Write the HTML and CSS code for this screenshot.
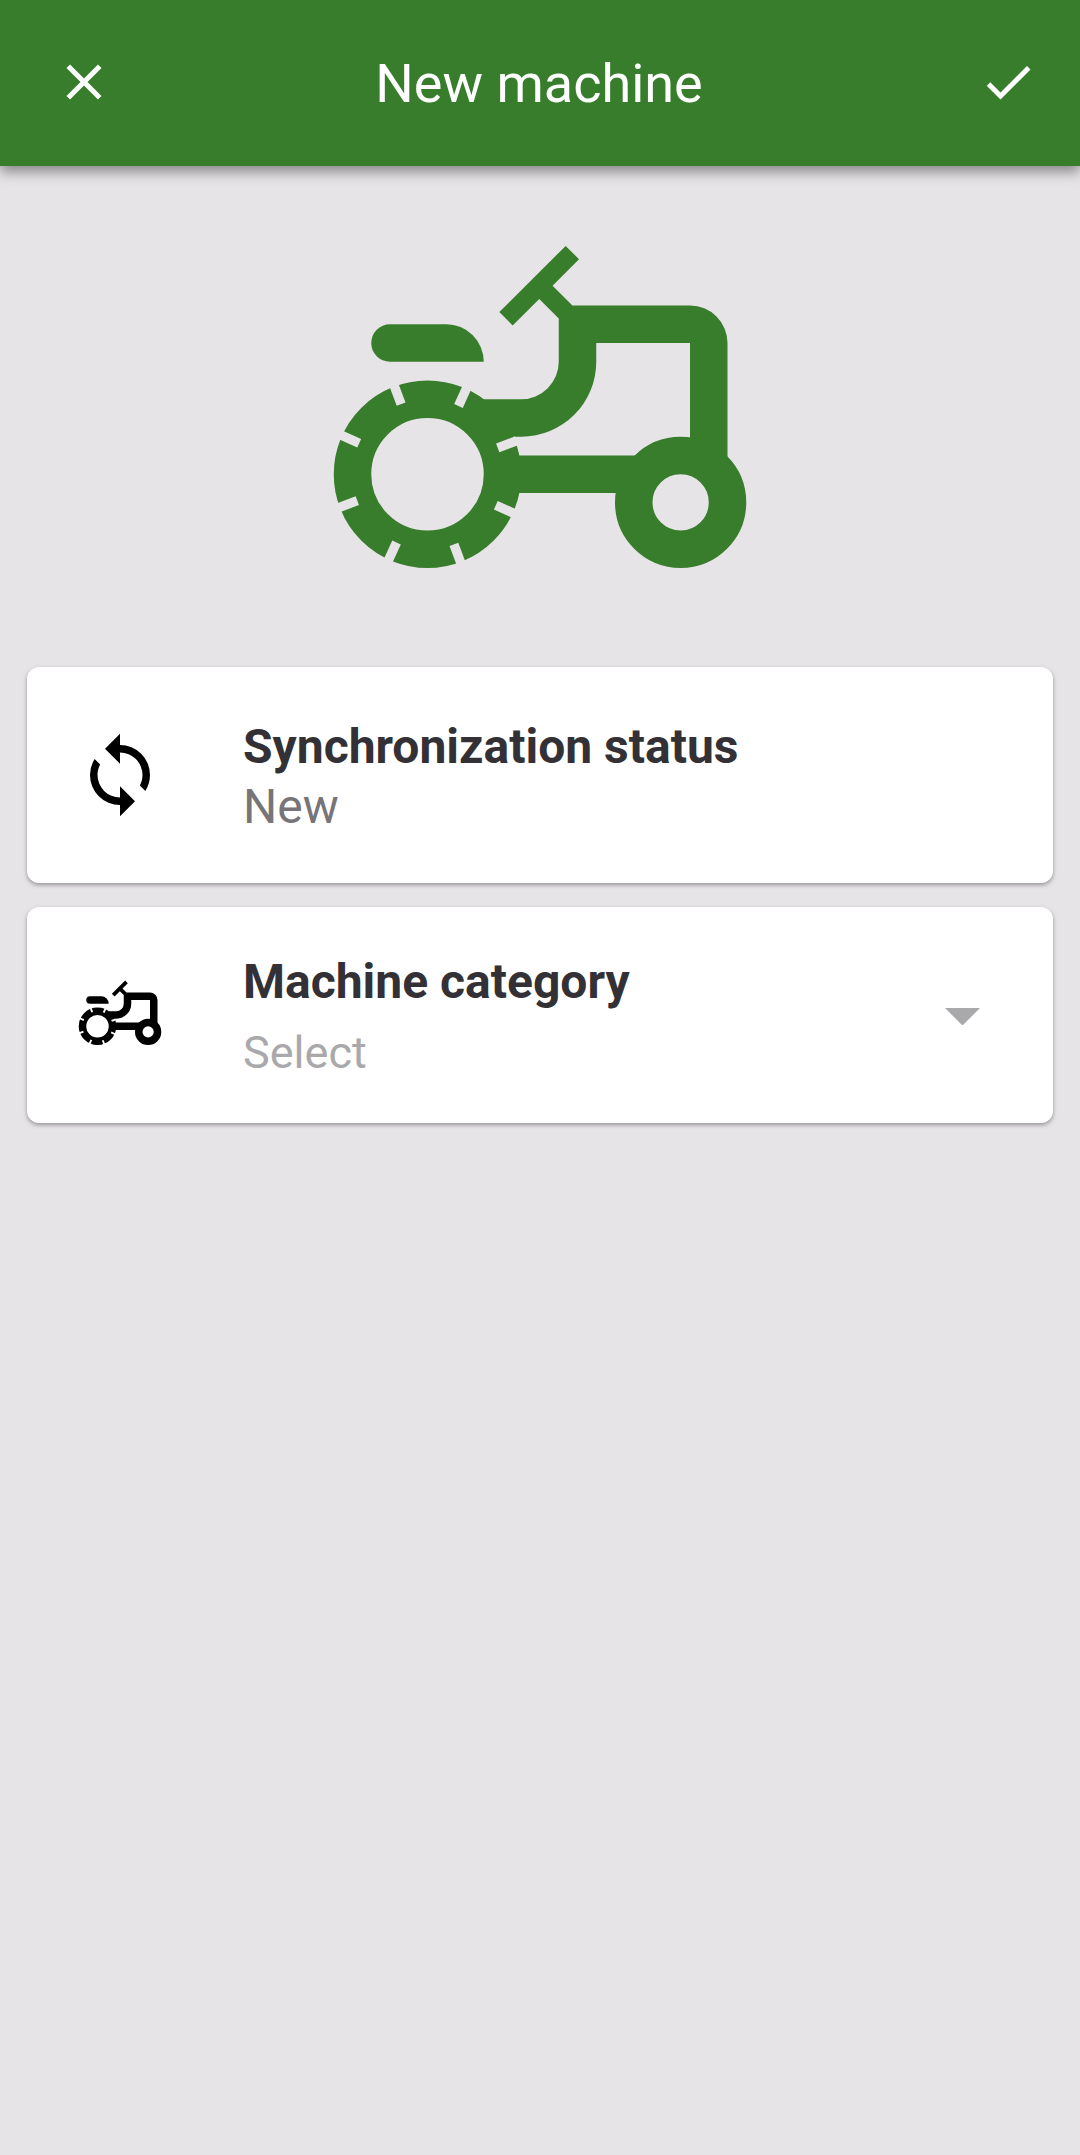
FILE: index.html
```html
<!DOCTYPE html>
<html lang="en">
<head>
  <meta charset="UTF-8" />
  <meta name="viewport" content="width=device-width, initial-scale=1.0"/>
  <title>New machine</title>
  <link rel="stylesheet" href="styles.css">
</head>
<body>

<!-- Shared tractor icon -->
<svg class="sprite" width="0" height="0">
  <defs>
    <mask id="treads" maskUnits="userSpaceOnUse" x="0" y="0" width="24" height="24">
      <rect width="24" height="24" fill="#fff"/>
      <g stroke="#000" stroke-width="0.5">
        <path d="M6 11V9.5" transform="rotate(24.4 6 15)"/>
        <path d="M6 11V9.93" transform="rotate(69.4 6 15)"/>
        <path d="M6 11V9.5" transform="rotate(114.4 6 15)"/>
        <path d="M6 11V9.5" transform="rotate(159.4 6 15)"/>
        <path d="M6 11V9.5" transform="rotate(204.4 6 15)"/>
        <path d="M6 11V9.5" transform="rotate(249.4 6 15)"/>
        <path d="M6 11V9.5" transform="rotate(294.4 6 15)"/>
        <path d="M6 11V9.5" transform="rotate(339.4 6 15)"/>
      </g>
    </mask>
    <symbol id="tractor" viewBox="0 0 24 24">
      <path d="M4 7h3a2 2 0 0 1 2 2H4a1 1 0 0 1 0-2z"/>
      <g mask="url(#treads)">
        <circle cx="6" cy="15" r="4" fill="none" stroke="currentColor" stroke-width="2"/>
        <path d="M8.9 11H11a2 2 0 0 0 2-2V6.69l-1.04-1.04-1.42 1.41-.71-.71 3.54-3.53.71.71-1.41 1.41L13.73 6H20a2 2 0 0 1 2 2v6.2h-2V8h-5v1a4 4 0 0 1-4 4h-1z"/>
        <path d="M10 14h7.2v2H10z"/>
      </g>
      <circle cx="19.5" cy="16.5" r="2.5" fill="none" stroke="currentColor" stroke-width="2"/>
    </symbol>
  </defs>
</svg>

<header class="app-bar">
  <button class="icon-button" aria-label="Close">
    <svg viewBox="0 0 24 24"><path d="M19 6.41L17.59 5 12 10.59 6.41 5 5 6.41 10.59 12 5 17.59 6.41 19 12 13.41 17.59 19 19 17.59 13.41 12z"/></svg>
  </button>
  <h1 class="title">New machine</h1>
  <button class="icon-button" aria-label="Save">
    <svg viewBox="0 0 24 24"><path d="M21 7L9 19l-5.5-5.5 1.41-1.41L9 16.17 19.59 5.59z"/></svg>
  </button>
</header>

<main class="content">
  <svg class="machine-image"><use href="#tractor"/></svg>

  <section class="card">
    <svg class="card-icon" viewBox="0 0 24 24"><path d="M12 18a6 6 0 0 1-6-6c0-1 .25-1.97.7-2.8L5.24 7.74A7.93 7.93 0 0 0 4 12a8 8 0 0 0 8 8v3l4-4-4-4v3zM12 4V1L8 5l4 4V6a6 6 0 0 1 6 6c0 1-.25 1.97-.7 2.8l1.46 1.46A7.93 7.93 0 0 0 20 12a8 8 0 0 0-8-8z"/></svg>
    <div class="card-text">
      <div class="label">Synchronization status</div>
      <div class="value">New</div>
    </div>
  </section>

  <section class="card">
    <svg class="card-icon"><use href="#tractor"/></svg>
    <div class="card-text">
      <div class="label">Machine category</div>
      <div class="placeholder">Select</div>
    </div>
    <svg class="arrow" viewBox="0 0 35 17.5"><path d="M0 0h35L17.5 17.5z"/></svg>
  </section>
</main>

</body>
</html>
```
FILE: styles.css
```css
* {
  box-sizing: border-box;
}
body {
  margin: 0;
  min-height: 100vh;
  font-family: Roboto, sans-serif;
  background: #e6e4e6;
}
svg {
  display: block;
  fill: currentColor;
}
.sprite {
  position: absolute;
}
.app-bar {
  display: flex;
  align-items: center;
  justify-content: space-between;
  height: 166px;
  padding: 0 42px 2px 54px;
  background: #377d2b;
  color: #fff;
  box-shadow: 0 6px 12px rgba(0, 0, 0, 0.4);
}
.icon-button {
  width: 60px;
  height: 60px;
  padding: 0;
  border: none;
  background: none;
  color: inherit;
  cursor: pointer;
}
.title {
  margin: 0 0 0 -14px;
  padding-top: 4px;
  font-size: 54px;
  font-weight: 400;
  line-height: 64px;
}
.content {
  display: flex;
  flex-direction: column;
  gap: 24px;
  padding: 27px;
}
.machine-image {
  width: 450px;
  height: 450px;
  align-self: center;
  color: #377d2b;
}
.card {
  display: flex;
  align-items: center;
  height: 216px;
  padding: 0 73px 0 48px;
  background: #fff;
  border-radius: 12px;
  box-shadow: 0 2px 4px rgba(0, 0, 0, 0.35);
}
.card-icon {
  width: 90px;
  height: 90px;
  color: #000;
}
.card-text {
  flex: 1;
  margin-left: 78px;
  padding-top: 4px;
}
.label {
  font-size: 48px;
  font-weight: 700;
  line-height: 60px;
  color: #333135;
}
.value {
  font-size: 48px;
  line-height: 60px;
  color: #777577;
}
.placeholder {
  margin-top: 11px;
  font-size: 45px;
  line-height: 60px;
  color: #a9a8aa;
}
.arrow {
  width: 35px;
  height: 17.5px;
  margin-top: 3px;
  color: #a9a8aa;
}
```
